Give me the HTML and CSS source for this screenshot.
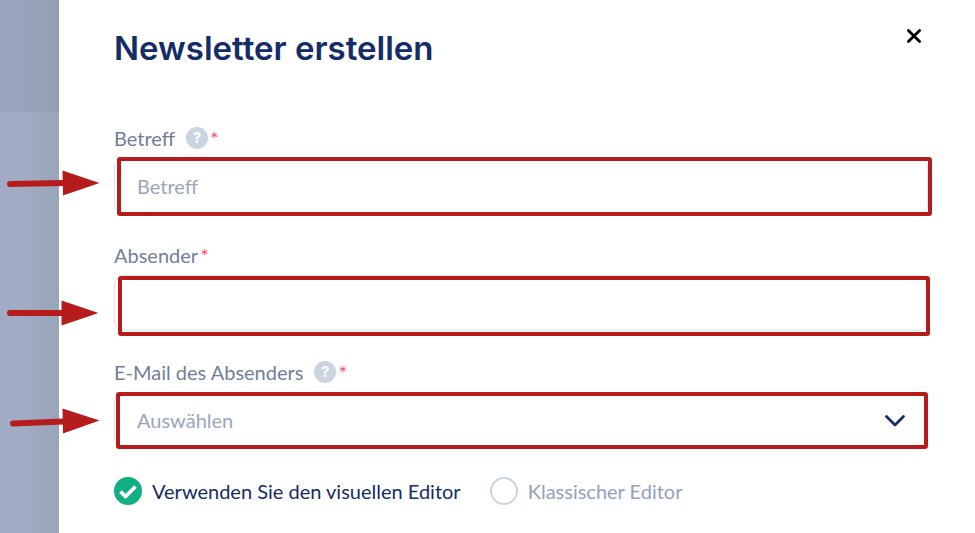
FILE: index.html
```html
<!DOCTYPE html>
<html lang="de">
<head>
<meta charset="utf-8">
<meta name="viewport" content="width=device-width, initial-scale=1">
<title>Newsletter erstellen</title>
<link rel="stylesheet" href="styles.css">
</head>
<body>
<div class="backdrop"></div>
<main class="panel">
  <header class="panel-header">
    <h1>Newsletter erstellen</h1>
    <button class="close" type="button" aria-label="Schließen">
      <svg width="16" height="16" viewBox="0 0 16 16"><path d="M2.4 2.4 13.6 13.6M13.6 2.4 2.4 13.6" fill="none" stroke="#000" stroke-width="2.8" stroke-linecap="round"/></svg>
    </button>
  </header>
  <form class="form">
    <div class="field">
      <div class="field-label">
        <label for="subject">Betreff</label>
        <button class="help" type="button">?</button>
        <span class="required">*</span>
      </div>
      <div class="control">
        <input class="box" id="subject" type="text" placeholder="Betreff">
        <span class="frame frame-subject"></span>
        <svg class="arrow" width="94" height="28" viewBox="0 0 94 28"><path d="M3 15 56 14" stroke="#b71c1c" stroke-width="6" stroke-linecap="round"/><path d="M55.500 1.500 92.500 14 56 26.500z" fill="#b71c1c"/></svg>
      </div>
    </div>
    <div class="field">
      <div class="field-label">
        <label for="sender">Absender</label>
        <span class="required">*</span>
      </div>
      <div class="control">
        <input class="box" id="sender" type="text">
        <span class="frame frame-sender"></span>
        <svg class="arrow arrow-sender" width="94" height="28" viewBox="0 0 94 28"><path d="M3 14H56" stroke="#b71c1c" stroke-width="6" stroke-linecap="round"/><path d="M54.500 1.500 91.500 14 54.500 26.500z" fill="#b71c1c"/></svg>
      </div>
    </div>
    <div class="field">
      <div class="field-label">
        <label for="email">E-Mail des Absenders</label>
        <button class="help" type="button">?</button>
        <span class="required">*</span>
      </div>
      <div class="control">
        <select class="box" id="email"><option>Auswählen</option></select>
        <svg class="chevron" width="22" height="14" viewBox="0 0 22 14"><path d="M2.500 2.500 11 11 19.500 2.500" fill="none" stroke="#152c66" stroke-width="2.800" stroke-linecap="round" stroke-linejoin="round"/></svg>
        <span class="frame frame-email"></span>
        <svg class="arrow arrow-email" width="94" height="28" viewBox="0 0 94 28"><path d="M6 16.500 56 14.500" stroke="#b71c1c" stroke-width="6" stroke-linecap="round"/><path d="M55.500 1.500 92.500 13.500 56 26.500z" fill="#b71c1c"/></svg>
      </div>
    </div>
    <div class="editors">
      <label class="choice chosen">
        <span class="mark">
          <input type="radio" name="editor" checked>
          <svg width="28" height="28" viewBox="0 0 28 28"><path d="M6.500 14.500 11.500 19.500 21.500 9.500" fill="none" stroke="#fff" stroke-width="3.800"/></svg>
        </span>
        Verwenden Sie den visuellen Editor
      </label>
      <label class="choice">
        <span class="mark"><input type="radio" name="editor"></span>
        Klassischer Editor
      </label>
    </div>
  </form>
</main>
</body>
</html>
```
FILE: styles.css
```css
* { box-sizing: border-box; }

body {
  margin: 0;
  min-height: 100vh;
  display: grid;
  grid-template-columns: 59px 1fr;
  background: #fff;
  font-family: Lato, "Open Sans", sans-serif;
  font-size: 20px;
  line-height: 24px;
}

button, input, select { font: inherit; margin: 0; }

.backdrop {
  background:
    linear-gradient(90deg, transparent 40%, rgba(140, 155, 165, 0.4)),
    linear-gradient(#98a3bc 112px, #a1abc4 112px);
}

.panel { padding: 24px 47px 24px 55px; }

.panel-header {
  display: flex;
  justify-content: space-between;
  align-items: flex-start;
}

h1 {
  margin: 0;
  color: #152c66;
  font: 600 33px/48px Inter, sans-serif;
}

.close {
  width: 28px;
  height: 24px;
  padding: 0;
  border: 0;
  background: none;
  display: grid;
  place-items: center;
}

.form {
  margin-top: 54px;
  display: grid;
  gap: 29px;
}

.field { display: grid; gap: 8px; }

.field-label {
  display: flex;
  align-items: center;
  gap: 2px;
  color: #718096;
}

.help {
  width: 22px;
  height: 22px;
  margin-left: 9px;
  padding: 0;
  border: 0;
  border-radius: 50%;
  background: #cbd5e1;
  color: #fff;
  font: 800 14px/22px Inter, sans-serif;
}

.required { color: #ff4770; }

.control { position: relative; display: grid; }

.box {
  width: 100%;
  height: 56px;
  padding: 0 22px;
  border: 1px solid #e0e3e8;
  border-radius: 10px;
  background: #fff;
  color: #9aa7b8;
  appearance: none;
}

.box::placeholder { color: #9aa7b8; opacity: 1; }

.frame {
  position: absolute;
  border: 4px solid #b71c1c;
  border-radius: 3px;
  pointer-events: none;
}

.frame-subject { inset: -1px -4px -2px 3px; }
.frame-sender { inset: 1px -2px -5px 4px; }
.frame-email { inset: 0 0 -1px 2px; }

.arrow {
  position: absolute;
  top: 11px;
  left: -107px;
  pointer-events: none;
}

.arrow-sender { top: 24px; }
.arrow-email { top: 15px; }

.chevron {
  position: absolute;
  top: 22px;
  right: 22px;
  pointer-events: none;
}

.editors {
  display: flex;
  flex-wrap: wrap;
  gap: 29px;
}

.choice {
  display: flex;
  align-items: center;
  gap: 10px;
  color: #94a0bb;
}

.chosen { color: #152c66; }

.mark { display: grid; width: 28px; height: 28px; }
.mark > * { grid-area: 1 / 1; }
.mark svg { pointer-events: none; }

.mark input {
  width: 28px;
  height: 28px;
  border: 2px solid #cbd5e1;
  border-radius: 50%;
  appearance: none;
}

.mark input:checked {
  border-color: #12ae84;
  background: #12ae84;
}
```
